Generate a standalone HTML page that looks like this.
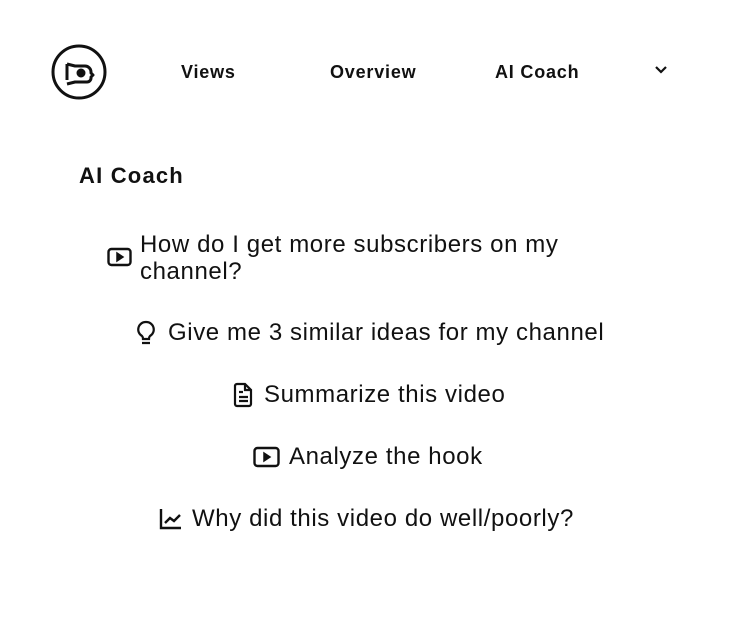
<!DOCTYPE html>
<html><head><meta charset="utf-8"><style>
body{margin:0;width:740px;height:629px;background:#fff;font-family:"Liberation Sans",sans-serif;color:#111;position:relative;overflow:hidden}
.a{position:absolute;white-space:nowrap}
.nav{font-weight:bold;font-size:18px;top:62px;letter-spacing:0.8px}
.it{font-size:24px;line-height:27px;letter-spacing:0.6px}
svg{position:absolute}
</style></head><body>
<svg style="left:50px;top:44px" width="58" height="58" viewBox="0 0 58 58" fill="none" stroke="#111" stroke-width="3">
<circle cx="29" cy="28" r="26"/>
<path d="M17 20v16M17 20l8 2h10a6 6 0 0 1 6 6v1l2 2-2 2v1a4 4 0 0 1-4 4H25l-8 2" stroke-linejoin="round"/>
<circle cx="31" cy="29" r="3" fill="#111"/>
</svg>
<div class="a nav" style="left:181px">Views</div>
<div class="a nav" style="left:330px">Overview</div>
<div class="a nav" style="left:495px">AI Coach</div>
<svg style="left:654px;top:64px" width="14" height="12" viewBox="0 0 14 12" fill="none" stroke="#111" stroke-width="2.2"><path d="M2 3l5 5 5-5"/></svg>
<div class="a" style="left:79px;top:163px;font-weight:bold;font-size:22px;letter-spacing:1.2px">AI Coach</div>

<svg style="left:107px;top:247px" width="25" height="20" viewBox="0 0 25 20" fill="none" stroke="#111" stroke-width="2.4"><rect x="1.5" y="2" width="22" height="16" rx="3"/><path d="M10 6v8l6-4z" fill="#111" stroke-width="1.5"/></svg>
<div class="a it" style="left:140px;top:231px">How do I get more subscribers on my<br>channel?</div>

<svg style="left:135px;top:320px" width="22" height="26" viewBox="0 0 22 26" fill="none" stroke="#111" stroke-width="2.2"><path d="M11 2a7.5 7.5 0 0 0-4 14c1 1 1 2 1 3h6c0-1 0-2 1-3a7.5 7.5 0 0 0-4-14zM7 23h8"/></svg>
<div class="a it" style="left:168px;top:319px">Give me 3 similar ideas for my channel</div>

<svg style="left:232px;top:382px" width="22" height="26" viewBox="0 0 22 26" fill="none" stroke="#111" stroke-width="2.2"><path d="M3 4a2 2 0 0 1 2-2h8l6 6v14a2 2 0 0 1-2 2H5a2 2 0 0 1-2-2z M13 2v6h6 M7 10h4 M7 15h9 M7 19h9"/></svg>
<div class="a it" style="left:264px;top:381px">Summarize this video</div>

<svg style="left:253px;top:446px" width="28" height="22" viewBox="0 0 28 22" fill="none" stroke="#111" stroke-width="2.4"><rect x="1.5" y="2" width="24" height="18" rx="3"/><path d="M11 7v8l6-4z" fill="#111" stroke-width="1.5"/></svg>
<div class="a it" style="left:289px;top:443px">Analyze the hook</div>

<svg style="left:159px;top:507px" width="24" height="24" viewBox="0 0 24 24" fill="none" stroke="#111" stroke-width="2.4"><path d="M2 2v19h20 M6 16l5-5 4 3 6-6"/></svg>
<div class="a it" style="left:192px;top:505px">Why did this video do well/poorly?</div>
</body></html>
